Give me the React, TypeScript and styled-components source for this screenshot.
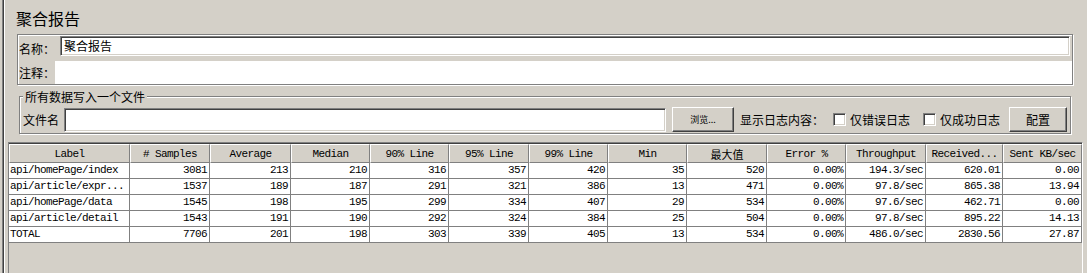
import styled, { createGlobalStyle } from "styled-components";

const GlobalStyle = createGlobalStyle`
  html, body {
    margin: 0;
    padding: 0;
    background: #d4d0c8;
    overflow: hidden;
  }
  body {
    font-family: "Noto Sans CJK SC", "Liberation Sans", sans-serif;
    font-size: 12px;
    color: #000;
  }
`;

const Frame = styled.div`
  display: flex;
  width: 1087px;
  height: 273px;
  overflow: hidden;
`;

const Rail = styled.div`
  width: 8px;
  flex: none;
  background: linear-gradient(to right, #d4d0c8 0 2px, #808080 2px 3px, #404040 3px 4px, #ffffff 4px 5px, #d4d0c8 5px);
`;

const Main = styled.div`
  flex: 1;
  display: flex;
  flex-direction: column;
`;

const Title = styled.div`
  height: 34px;
  margin-left: 8px;
  padding-top: 8px;
  box-sizing: border-box;
  font-size: 16px;
  line-height: 20px;
`;

const Panel = styled.div`
  margin-left: 9px;
  width: 1056px;
  height: 51px;
  box-sizing: border-box;
  border: 1px solid #808080;
  box-shadow: inset 1px 1px 0 #fff, 1px 1px 0 #fff;
  display: flex;
  flex-direction: column;
`;

const NameRow = styled.div`
  display: flex;
  height: 26px;
  padding-top: 1px;
  box-sizing: border-box;
`;

const CommentRow = styled.div`
  display: flex;
  flex: 1;
`;

const Label = styled.div<{ $w: number }>`
  width: ${(p) => p.$w}px;
  flex: none;
  padding-left: 1px;
  box-sizing: border-box;
  display: flex;
  align-items: center;
  white-space: nowrap;
`;

const Sunken = styled.div<{ $w?: number; $h: number }>`
  ${(p) => (p.$w ? `width: ${p.$w}px; flex: none;` : "flex: 1;")}
  height: ${(p) => p.$h}px;
  box-sizing: border-box;
  background: #fff;
  border-style: solid;
  border-width: 1px;
  border-color: #808080 #fff #fff #808080;
  box-shadow: inset 1px 1px 0 #404040, inset -1px -1px 0 #d4d0c8;
  padding: 1px 0 0 3px;
  line-height: 16px;
  white-space: nowrap;
`;

const NameInput = styled(Sunken)`
  margin-right: 2px;
`;

const PlainField = styled.div`
  flex: 1;
  background: #fff;
`;

const Group = styled.fieldset`
  margin: 5px 0 0 11px;
  width: 1052px;
  box-sizing: border-box;
  padding: 4px 2px 1px 2px;
  border: 1px solid #808080;
  box-shadow: inset 1px 1px 0 #fff, 1px 1px 0 #fff;
  min-width: 0;
`;

const Legend = styled.legend`
  margin-left: 1px;
  padding: 0 2px;
  background: #d4d0c8;
  font-size: 12px;
  line-height: 13px;
`;

const FileRow = styled.div`
  display: flex;
  align-items: center;
  height: 25px;
`;

const Button = styled.div<{ $w: number; $small?: boolean; $ml: number }>`
  width: ${(p) => p.$w}px;
  height: 25px;
  flex: none;
  box-sizing: border-box;
  background: #d4d0c8;
  border-style: solid;
  border-width: 1px;
  border-color: #fff #404040 #404040 #fff;
  box-shadow: inset -1px -1px 0 #808080;
  display: flex;
  align-items: center;
  justify-content: center;
  font-size: ${(p) => (p.$small ? 9 : 12)}px;
  margin-left: ${(p) => p.$ml}px;
`;

const Text = styled.span<{ $ml: number }>`
  margin-left: ${(p) => p.$ml}px;
  white-space: nowrap;
  line-height: 14px;
`;

const Check = styled.span<{ $ml: number }>`
  width: 13px;
  height: 13px;
  flex: none;
  box-sizing: border-box;
  margin-left: ${(p) => p.$ml}px;
  background: #fff;
  border-style: solid;
  border-width: 1px;
  border-color: #808080 #fff #fff #808080;
  box-shadow: inset 1px 1px 0 #404040, inset -1px -1px 0 #d4d0c8;
`;

const TablePane = styled.div`
  margin-top: 8px;
  width: 1075px;
  flex: 1;
  box-sizing: border-box;
  border-top: 1px solid #808080;
  border-left: 1px solid #808080;
  border-right: 1px solid #fff;
  box-shadow: inset 0 1px 0 #404040;
  padding-top: 1px;
`;

const cols = [121, 80, 81, 79, 79, 80, 79, 79, 80, 79, 80, 77, 79];

const Row = styled.div`
  display: grid;
  grid-template-columns: ${cols.map((c) => `${c}px`).join(" ")};
  font-family: "Liberation Mono", "Noto Sans CJK SC", monospace;
  font-size: 11px;
  letter-spacing: -0.6px;
`;

const HeadCell = styled.div<{ $cjk?: boolean }>`
  height: 19px;
  box-sizing: border-box;
  background: #d4d0c8;
  border-style: solid;
  border-width: 1px;
  border-color: #fff #808080 #808080 #fff;
  display: flex;
  align-items: center;
  justify-content: center;
  white-space: nowrap;
  overflow: hidden;
  ${(p) => (p.$cjk ? `font-family: "Noto Sans CJK SC", sans-serif; font-size: 11px; letter-spacing: 0;` : "")}
`;

const Cell = styled.div<{ $left?: boolean }>`
  height: 16px;
  box-sizing: border-box;
  background: #fff;
  border-right: 1px solid #808080;
  border-bottom: 1px solid #808080;
  display: flex;
  align-items: center;
  justify-content: ${(p) => (p.$left ? "flex-start" : "flex-end")};
  padding: 0 2px 0 1px;
  white-space: nowrap;
  overflow: hidden;
  line-height: 15px;
`;

const headers = [
  "Label",
  "# Samples",
  "Average",
  "Median",
  "90% Line",
  "95% Line",
  "99% Line",
  "Min",
  "最大值",
  "Error %",
  "Throughput",
  "Received...",
  "Sent KB/sec",
];

const rows = [
  ["api/homePage/index", "3081", "213", "210", "316", "357", "420", "35", "520", "0.00%", "194.3/sec", "620.01", "0.00"],
  ["api/article/expr...", "1537", "189", "187", "291", "321", "386", "13", "471", "0.00%", "97.8/sec", "865.38", "13.94"],
  ["api/homePage/data", "1545", "198", "195", "299", "334", "407", "29", "534", "0.00%", "97.6/sec", "462.71", "0.00"],
  ["api/article/detail", "1543", "191", "190", "292", "324", "384", "25", "504", "0.00%", "97.8/sec", "895.22", "14.13"],
  ["TOTAL", "7706", "201", "198", "303", "339", "405", "13", "534", "0.00%", "486.0/sec", "2830.56", "27.87"],
];

export default function App() {
  return (
    <>
      <GlobalStyle />
      <Frame>
        <Rail />
        <Main>
          <Title>聚合报告</Title>
          <Panel>
            <NameRow>
              <Label $w={42}>名称：</Label>
              <NameInput $h={20}>聚合报告</NameInput>
            </NameRow>
            <CommentRow>
              <Label $w={37}>注释：</Label>
              <PlainField />
            </CommentRow>
          </Panel>
          <Group>
            <Legend>所有数据写入一个文件</Legend>
            <FileRow>
              <Label $w={42}>文件名</Label>
              <Sunken $w={602} $h={24} />
              <Button $w={62} $ml={6} $small>
                浏览...
              </Button>
              <Text $ml={6}>显示日志内容：</Text>
              <Check $ml={9} />
              <Text $ml={4}>仅错误日志</Text>
              <Check $ml={13} />
              <Text $ml={4}>仅成功日志</Text>
              <Button $w={58} $ml={9}>
                配置
              </Button>
            </FileRow>
          </Group>
          <TablePane>
            <Row>
              {headers.map((h) => (
                <HeadCell key={h} $cjk={h === "最大值"}>
                  {h}
                </HeadCell>
              ))}
            </Row>
            {rows.map((r) => (
              <Row key={r[0]}>
                {r.map((v, i) => (
                  <Cell key={i} $left={i === 0}>
                    {v}
                  </Cell>
                ))}
              </Row>
            ))}
          </TablePane>
        </Main>
      </Frame>
    </>
  );
}
